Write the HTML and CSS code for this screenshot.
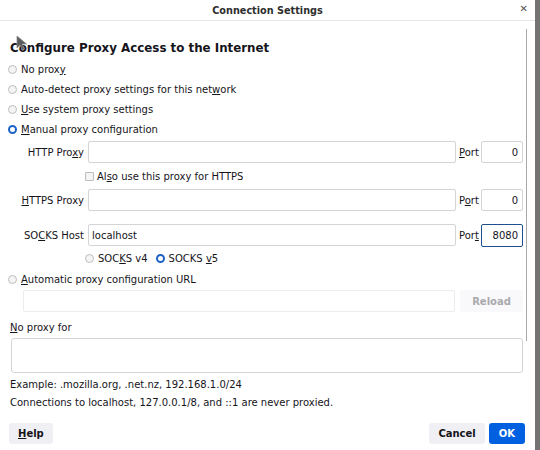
FILE: index.html
```html
<!DOCTYPE html>
<html lang="en">
<head>
  <meta charset="UTF-8">
  <title>Connection Settings</title>
  <link rel="stylesheet" href="styles.css">
</head>
<body>
  <div class="screen">
    <div class="dialog">
      <div class="titlebar">
        <span class="title">Connection Settings</span>
        <span class="close">&#x2715;</span>
      </div>
      <div class="content">
        <h2 class="heading">Configure Proxy Access to the Internet</h2>
        <div class="opt"><i class="radio"></i><span>No prox<u>y</u></span></div>
        <div class="opt"><i class="radio"></i><span>Auto-detect proxy settings for this net<u>w</u>ork</span></div>
        <div class="opt"><i class="radio"></i><span><u>U</u>se system proxy settings</span></div>
        <div class="opt"><i class="radio checked"></i><span><u>M</u>anual proxy configuration</span></div>

        <div class="field-row first">
          <span class="field-label">HTTP Pro<u>x</u>y</span>
          <span class="input host"></span>
          <span class="port-label"><u>P</u>ort</span>
          <span class="input port">0</span>
        </div>
        <div class="check-row"><i class="checkbox"></i><span>Al<u>s</u>o use this proxy for HTTPS</span></div>
        <div class="field-row">
          <span class="field-label"><u>H</u>TTPS Proxy</span>
          <span class="input host"></span>
          <span class="port-label">P<u>o</u>rt</span>
          <span class="input port">0</span>
        </div>
        <div class="field-row socks">
          <span class="field-label">SO<u>C</u>KS Host</span>
          <span class="input host">localhost</span>
          <span class="port-label">Por<u>t</u></span>
          <span class="input port focus">8080</span>
        </div>
        <div class="socks-row">
          <span class="opt-inline"><i class="radio"></i><span>SOC<u>K</u>S v4</span></span>
          <span class="opt-inline"><i class="radio checked"></i><span>SOCKS <u>v</u>5</span></span>
        </div>
        <div class="opt"><i class="radio"></i><span><u>A</u>utomatic proxy configuration URL</span></div>
        <div class="url-row">
          <span class="input url"></span>
          <span class="btn reload">Reload</span>
        </div>

        <div class="noproxy-label"><u>N</u>o proxy for</div>
        <div class="textarea"></div>
        <p class="note">Example: .mozilla.org, .net.nz, 192.168.1.0/24</p>
        <p class="note">Connections to localhost, 127.0.0.1/8, and ::1 are never proxied.</p>
      </div>
      <div class="buttons">
        <span class="btn"><span><u>H</u>elp</span></span>
        <span class="spacer"></span>
        <span class="btn">Cancel</span>
        <span class="btn primary">OK</span>
      </div>
      <div class="scroll-line"></div>
      <svg class="cursor" width="12" height="16" viewBox="0 0 12 16">
        <path d="M1 1 L1 13 L4 10 L6.5 15 L8.5 14 L6 9 L10.5 9 Z" fill="#5b5b5b" stroke="#8a8a8a" stroke-width="0.8"/>
      </svg>
    </div>
    <div class="edge"></div>
  </div>
</body>
</html>
```

FILE: styles.css
```css
html,body,div,p,h2{margin:0;padding:0;}
body{
  width: 540px;
  height: 450px;
  overflow: hidden;
  background: #fff;
  color: #15141a;
  font-family: "DejaVu Sans", "Liberation Sans", sans-serif;
  font-size: 10px;
}
u{
  text-decoration-thickness: 1px;
  text-underline-offset: 1px;
}
.screen{
  display: flex;
  height: 450px;
}
.dialog{
  position: relative;
  width: 535px;
  height: 450px;
  display: flex;
  flex-direction: column;
}
.edge{
  width: 5px;
  background: #747474;
}
.titlebar{
  height: 20px;
  border-bottom: 1px solid #e6e6e6;
  display: flex;
  align-items: center;
  justify-content: center;
  position: relative;
}
.title{
  font-weight: bold;
  font-size: 9.7px;
  color: #2e2e2e;
}
.close{
  position: absolute;
  right: 7px;
  top: 3px;
  font-size: 10px;
  color: #555;
}
.content{
  padding: 0 8px;
}
.heading{
  margin-top: 19px;
  margin-left: 2px;
  font-size: 11.85px;
  line-height: 17px;
  font-weight: bold;
}
.opt{
  height: 20px;
  display: flex;
  align-items: center;
}
.heading + .opt{
  margin-top: 2px;
}
.radio{
  display: inline-block;
  box-sizing: border-box;
  width: 9px;
  height: 9px;
  border-radius: 50%;
  border: 1px solid #bdbdbd;
  background: #f4f4f4;
  margin-right: 4px;
}
.radio.checked{
  border: 2.5px solid #1c62c4;
  background: #fff;
}
.field-row{
  display: flex;
  align-items: center;
  height: 22px;
}
.field-row.first{
  margin-top: 2px;
}
.field-row.socks{
  margin-top: 13px;
}
.field-label{
  width: 76px;
  text-align: right;
}
.input{
  box-sizing: border-box;
  height: 22px;
  border: 1px solid #d4d4d8;
  border-radius: 2px;
  background: #fff;
  display: flex;
  align-items: center;
  padding: 0 3px;
}
.input.host{
  margin-left: 4px;
  width: 368px;
}
.port-label{
  margin-left: 3px;
  width: 22px;
}
.input.port{
  width: 42px;
  justify-content: flex-end;
  padding-right: 4px;
}
.input.focus{
  height: 23px;
  border: 1.5px solid #1f4f8f;
}
.check-row{
  height: 26px;
  display: flex;
  align-items: center;
  padding-left: 77px;
}
.checkbox{
  display: inline-block;
  box-sizing: border-box;
  width: 9px;
  height: 9px;
  border: 1px solid #bdbdbd;
  background: #f4f4f4;
  border-radius: 1px;
  margin-right: 3px;
}
.socks-row{
  height: 22px;
  display: flex;
  align-items: center;
  padding-left: 77px;
  margin-top: 1px;
}
.opt-inline{
  display: inline-flex;
  align-items: center;
  margin-right: 8px;
}
.opt-inline .radio{
  margin-right: 4px;
}
.url-row{
  display: flex;
  align-items: center;
  margin-top: 1px;
  padding-left: 15px;
}
.input.url{
  width: 432px;
  border-color: #ececee;
}
.btn{
  display: inline-flex;
  align-items: center;
  justify-content: center;
  height: 21px;
  padding: 0 9px;
  border-radius: 3px;
  background: #f0f0f4;
  font-weight: bold;
  color: #15141a;
}
.btn.reload{
  margin-left: 5px;
  width: 63px;
  height: 22px;
  box-sizing: border-box;
  background: #f9f9fb;
  color: #a9a9ad;
}
.noproxy-label{
  margin-top: 6px;
  margin-left: 2px;
  height: 20px;
  line-height: 20px;
}
.textarea{
  margin-left: 3px;
  width: 512px;
  height: 35px;
  box-sizing: border-box;
  border: 1px solid #d4d4d8;
  border-radius: 3px;
}
.note{
  margin-left: 2px;
  height: 18px;
  line-height: 18px;
}
.textarea + .note{
  margin-top: 3px;
}
.buttons{
  margin-top: 11px;
  display: flex;
  padding: 0 10px 0 9px;
  gap: 4px;
}
.spacer{
  flex: 1;
}
.btn.primary{
  background: #0060df;
  color: #fff;
  padding: 0 10px;
}
.scroll-line{
  position: absolute;
  left: 526px;
  top: 29px;
  width: 1px;
  height: 312px;
  background: #a8a8a8;
}
.cursor{
  position: absolute;
  left: 16px;
  top: 35px;
}
```
